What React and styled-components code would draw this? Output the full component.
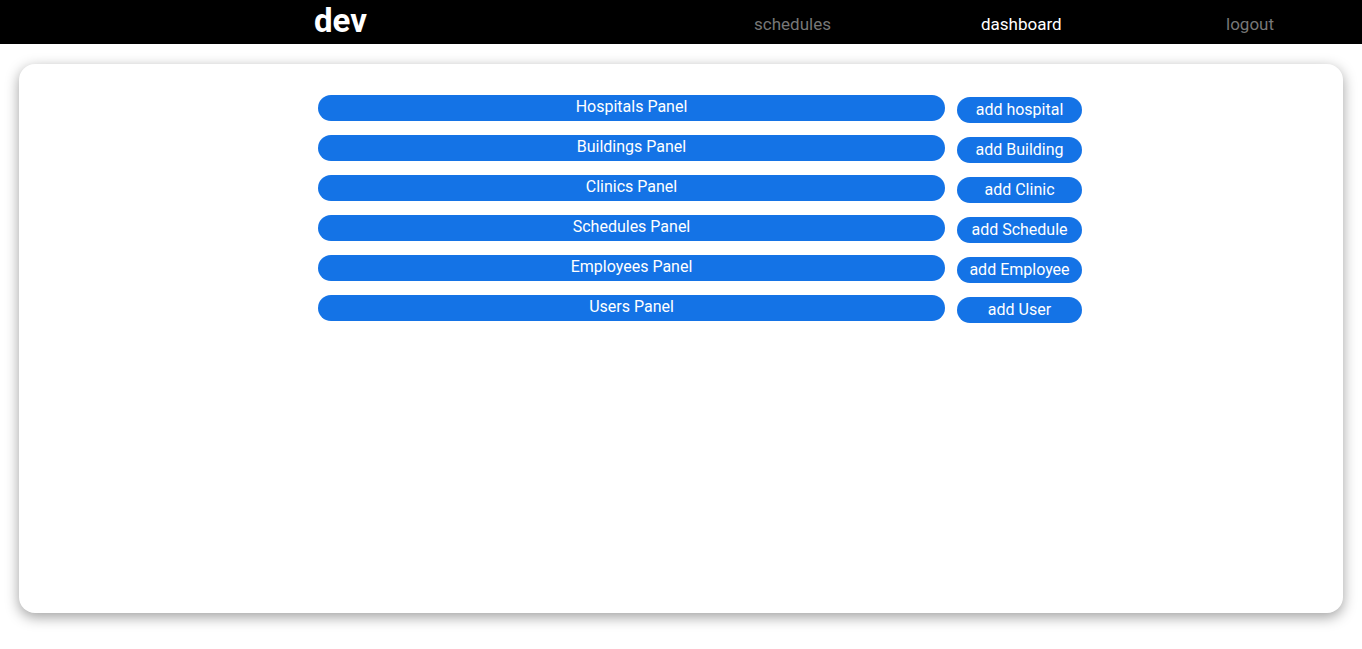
import React from "react";
import styled, { createGlobalStyle } from "styled-components";

const Global = createGlobalStyle`
  html, body { margin: 0; padding: 0; background: #fff; }
  body { font-family: Roboto, "Liberation Sans", sans-serif; }
  * { box-sizing: border-box; }
`;

const Page = styled.div`
  min-height: 649px;
  padding-bottom: 36px;
`;

const Header = styled.header`
  height: 44px;
  background: #000;
  display: flex;
  align-items: center;
  padding-left: 314px;
`;

const Logo = styled.div`
  color: #fff;
  font-size: 33px;
  font-weight: 700;
  line-height: 44px;
  margin-top: -3px;
  width: 440px;
`;

const Nav = styled.nav`
  display: flex;
  align-items: center;
`;

const NavLink = styled.a`
  color: ${(p) => (p.$active ? "#fff" : "#777")};
  font-size: 17px;
  text-decoration: none;
  width: ${(p) => p.$w}px;
  line-height: 44px;
  margin-top: 3px;
  cursor: pointer;
`;

const Card = styled.main`
  margin: 20px 19px 0;
  height: 549px;
  border-radius: 16px;
  background: #fff;
  box-shadow: 0 4px 14px rgba(0, 0, 0, 0.38);
  padding: 31px 0 0 299px;
  display: flex;
  flex-direction: column;
  gap: 12px;
`;

const Row = styled.div`
  display: flex;
  gap: 12px;
  align-items: flex-start;
`;

const Pill = styled.button`
  border: none;
  background: #1473e6;
  color: #fff;
  font-family: Roboto, "Liberation Sans", sans-serif;
  font-size: 16px;
  height: 26px;
  border-radius: 13px;
  padding: 0 0 ${(p) => (p.$wide ? 3 : 0)}px;
  line-height: 20px;
  width: ${(p) => (p.$wide ? 627 : 125)}px;
  margin-top: ${(p) => (p.$wide ? 0 : 2)}px;
  text-align: center;
  cursor: pointer;
`;

const rows = [
  ["Hospitals Panel", "add hospital"],
  ["Buildings Panel", "add Building"],
  ["Clinics Panel", "add Clinic"],
  ["Schedules Panel", "add Schedule"],
  ["Employees Panel", "add Employee"],
  ["Users Panel", "add User"],
];

export default function App() {
  return (
    <Page>
      <Global />
      <Header>
        <Logo>dev</Logo>
        <Nav>
          <NavLink $w={227}>schedules</NavLink>
          <NavLink $w={245} $active>dashboard</NavLink>
          <NavLink $w={60}>logout</NavLink>
        </Nav>
      </Header>
      <Card>
        {rows.map(([a, b]) => (
          <Row key={a}>
            <Pill $wide>{a}</Pill>
            <Pill>{b}</Pill>
          </Row>
        ))}
      </Card>
    </Page>
  );
}
